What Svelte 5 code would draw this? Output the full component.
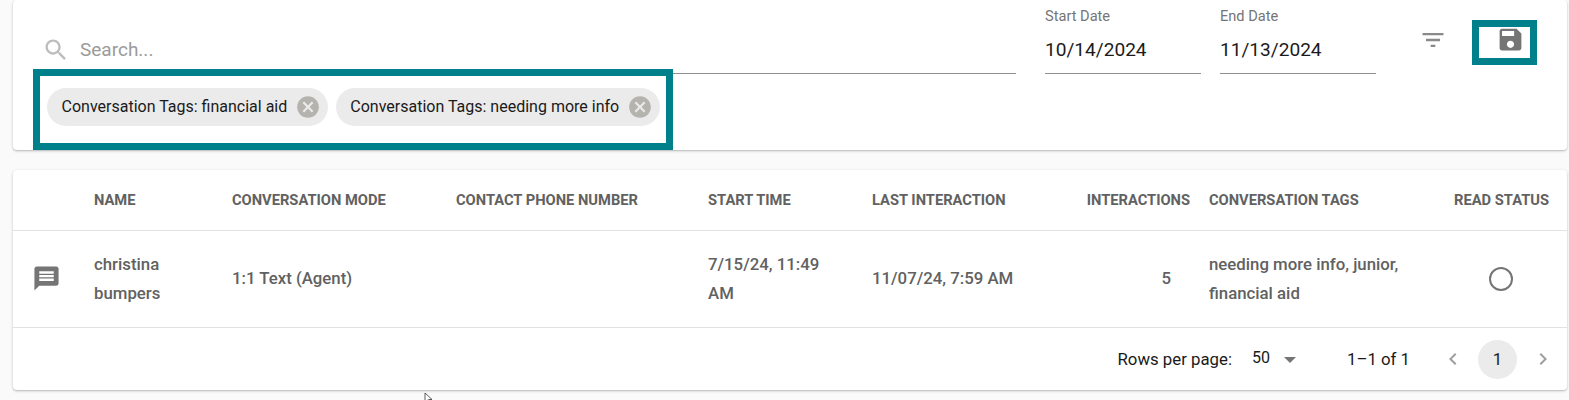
<script>
  const columns = [
    { label: 'NAME' },
    { label: 'CONVERSATION MODE' },
    { label: 'CONTACT PHONE NUMBER' },
    { label: 'START TIME' },
    { label: 'LAST INTERACTION' },
    { label: 'INTERACTIONS', cls: 'num' },
    { label: 'CONVERSATION TAGS' },
    { label: 'READ STATUS', cls: 'status' }
  ];
</script>

<div class="page">
  <section class="card filters">
    <div class="top">
      <label class="search">
        <svg class="search-icon" viewBox="0 0 24 24" aria-hidden="true"><path d="M15.5 14h-.79l-.28-.27C15.41 12.59 16 11.11 16 9.5 16 5.91 13.09 3 9.5 3S3 5.91 3 9.5 5.91 16 9.5 16c1.61 0 3.09-.59 4.23-1.57l.27.28v.79l5 4.99L20.49 19l-4.99-5zm-6 0C7.01 14 5 11.99 5 9.5S7.01 5 9.5 5 14 7.01 14 9.5 11.99 14 9.5 14z"/></svg>
        <span class="placeholder">Search...</span>
      </label>
      <div class="date">
        <span class="date-label">Start Date</span>
        <span class="date-value">10/14/2024</span>
      </div>
      <div class="date">
        <span class="date-label">End Date</span>
        <span class="date-value">11/13/2024</span>
      </div>
      <svg class="filter-icon" viewBox="0 0 24 24" aria-hidden="true"><path d="M10 18h4v-2h-4v2zM3 6v2h18V6H3zm3 7h12v-2H6v2z"/></svg>
      <div class="save">
        <svg viewBox="0 0 24 24" aria-hidden="true"><path d="M17 3H5c-1.11 0-2 .9-2 2v14c0 1.1.89 2 2 2h14c1.1 0 2-.9 2-2V7l-4-4zm-5 16c-1.66 0-3-1.34-3-3s1.34-3 3-3 3 1.34 3 3-1.34 3-3 3zm3-10H5V5h10v4z"/></svg>
      </div>
    </div>
    <div class="chips">
      <span class="chip">Conversation Tags: financial aid
        <svg viewBox="0 0 24 24" aria-hidden="true"><path d="M12 2C6.47 2 2 6.47 2 12s4.47 10 10 10 10-4.47 10-10S17.53 2 12 2zm5 13.59L15.59 17 12 13.41 8.41 17 7 15.59 10.59 12 7 8.41 8.41 7 12 10.59 15.59 7 17 8.41 13.41 12 17 15.59z"/></svg>
      </span>
      <span class="chip">Conversation Tags: needing more info
        <svg viewBox="0 0 24 24" aria-hidden="true"><path d="M12 2C6.47 2 2 6.47 2 12s4.47 10 10 10 10-4.47 10-10S17.53 2 12 2zm5 13.59L15.59 17 12 13.41 8.41 17 7 15.59 10.59 12 7 8.41 8.41 7 12 10.59 15.59 7 17 8.41 13.41 12 17 15.59z"/></svg>
      </span>
    </div>
  </section>

  <section class="card table">
    <div class="row head">
      <div></div>
      {#each columns as c}
        <div class={c.cls}>{c.label}</div>
      {/each}
    </div>
    <div class="row body">
      <div class="msg">
        <svg viewBox="0 0 24 24" aria-hidden="true"><path d="M20 2H4c-1.1 0-1.99.9-1.99 2L2 22l4-4h14c1.1 0 2-.9 2-2V4c0-1.1-.9-2-2-2zm-2 12H6v-2h12v2zm0-3H6V9h12v2zm0-3H6V6h12v2z"/></svg>
      </div>
      <div>christina<br />bumpers</div>
      <div>1:1 Text (Agent)</div>
      <div></div>
      <div>7/15/24, 11:49<br />AM</div>
      <div>11/07/24, 7:59 AM</div>
      <div class="num">5</div>
      <div>needing more info, junior,<br />financial aid</div>
      <div class="status"><span class="circle"></span></div>
    </div>
    <div class="pager">
      <span class="rows">Rows per page:</span>
      <span class="per">50</span>
      <span class="caret"></span>
      <span class="range">1–1 of 1</span>
      <svg class="chev" viewBox="0 0 24 24" aria-hidden="true"><path d="M15.41 7.41 14 6l-6 6 6 6 1.41-1.41L10.83 12z"/></svg>
      <span class="current">1</span>
      <svg class="chev" viewBox="0 0 24 24" aria-hidden="true"><path d="M10 6 8.59 7.41 13.17 12l-4.58 4.59L10 18l6-6z"/></svg>
    </div>
  </section>

  <svg class="cursor" viewBox="0 0 12 12" aria-hidden="true"><path d="M1 1v9l2.4-2 1.6 3.4 1.2-.6L4.7 7.5H8z"/></svg>
</div>

<style>
  :global(body) {
    margin: 0;
    background: #fafafa;
  }
  .page {
    position: relative;
    height: 400px;
    overflow: hidden;
    padding: 0 2px 0 13px;
    box-sizing: border-box;
    font-family: Roboto, "Liberation Sans", sans-serif;
    display: flex;
    flex-direction: column;
    gap: 20px;
  }
  .card {
    background: #fff;
    border-radius: 4px;
    box-shadow: 0 1px 3px rgba(0, 0, 0, 0.22), 0 1px 1px rgba(0, 0, 0, 0.08);
  }
  .filters {
    height: 150px;
    position: relative;
    flex: none;
  }
  .top {
    display: flex;
    align-items: flex-start;
    height: 74px;
    padding-left: 27px;
  }
  .search {
    width: 976px;
    height: 74px;
    box-sizing: border-box;
    border-bottom: 1px solid #8f8f8f;
    display: flex;
    align-items: center;
    padding: 26px 0 0 2px;
    margin-right: 29px;
  }
  .search-icon {
    width: 28px;
    height: 28px;
    fill: #bdbdbd;
    flex: none;
  }
  .placeholder {
    margin-left: 10px;
    font-size: 19px;
    color: #9b9b9b;
  }
  .date {
    width: 156px;
    height: 74px;
    box-sizing: border-box;
    border-bottom: 1px solid #8f8f8f;
    margin-right: 19px;
    display: flex;
    flex-direction: column;
  }
  .date-label {
    font-size: 14.6px;
    color: #757575;
    margin-top: 8px;
    line-height: 16px;
  }
  .date-value {
    font-size: 19.1px;
    color: #1a1a1a;
    margin-top: 14px;
    line-height: 24px;
  }
  .filter-icon {
    width: 28px;
    height: 28px;
    fill: #8a8a8a;
    margin: 26px 0 0 24px;
    flex: none;
  }
  .save {
    position: absolute;
    left: 1459px;
    top: 20px;
    width: 65px;
    height: 45px;
    box-sizing: border-box;
    border: 7px solid #00808a;
    display: flex;
    justify-content: flex-end;
    padding-right: 5px;
    align-items: flex-start;
  }
  .save svg {
    width: 29px;
    height: 29px;
    fill: #757575;
    margin-top: -2px;
    flex: none;
  }
  .chips {
    position: absolute;
    left: 20px;
    top: 69px;
    width: 640px;
    height: 81px;
    box-sizing: border-box;
    border: 7px solid #00808a;
    background: #fff;
    display: flex;
    gap: 8px;
    padding: 12px 0 0 7px;
  }
  .chip {
    height: 38px;
    box-sizing: border-box;
    border-radius: 19px;
    background: #ebebeb;
    display: flex;
    align-items: center;
    padding: 0 6.5px 1px 14.5px;
    gap: 8px;
    font-size: 16px;
    color: #1a1a1a;
    white-space: nowrap;
  }
  .chip svg {
    width: 26px;
    height: 26px;
    fill: #b5b3ae;
    flex: none;
  }
  .table {
    height: 220px;
    flex: none;
    display: flex;
    flex-direction: column;
  }
  .row {
    display: grid;
    grid-template-columns: 81px 138px 224px 252px 164px 214px 123px 227px 1fr;
    align-items: center;
    border-bottom: 1px solid #e2e2e2;
  }
  .head {
    height: 61px;
    box-sizing: border-box;
    font-size: 14.7px;
    font-weight: 700;
    color: #616161;
    padding-bottom: 1px;
  }
  .body {
    height: 97px;
    box-sizing: border-box;
    font-size: 16.8px;
    font-weight: 500;
    color: #616161;
    line-height: 29px;
    padding-bottom: 1px;
  }
  .num {
    text-align: right;
    padding-right: 19px;
  }
  .body .num {
    padding-right: 38px;
  }
  .status {
    text-align: right;
    padding-right: 18px;
  }
  .body .status {
    display: flex;
    justify-content: flex-end;
    padding-right: 54px;
  }
  .msg {
    padding-left: 19px;
    display: flex;
  }
  .msg svg {
    width: 29px;
    height: 29px;
    fill: #757575;
  }
  .circle {
    width: 20px;
    height: 20px;
    border: 2px solid #757575;
    border-radius: 50%;
  }
  .pager {
    flex: 1;
    display: flex;
    align-items: center;
    justify-content: flex-end;
    font-size: 16.8px;
    color: #1a1a1a;
    padding-right: 12px;
  }
  .per {
    margin-left: 20px;
    margin-top: -3px;
    font-size: 16px;
  }
  .caret {
    margin-left: 14px;
    border: 6.5px solid transparent;
    border-top-color: #757575;
    border-bottom: none;
    margin-top: 2px;
  }
  .range {
    margin-left: 51px;
    margin-right: 31px;
  }
  .chev {
    width: 24px;
    height: 24px;
    fill: #9e9e9e;
  }
  .current {
    width: 39px;
    height: 39px;
    border-radius: 50%;
    background: #ebebeb;
    display: flex;
    align-items: center;
    justify-content: center;
    margin: 0 14px 0 13px;
  }
  .cursor {
    position: absolute;
    left: 424px;
    top: 392px;
    width: 12px;
    height: 12px;
    fill: #fff;
    stroke: #333;
    stroke-width: 0.8;
  }
</style>
